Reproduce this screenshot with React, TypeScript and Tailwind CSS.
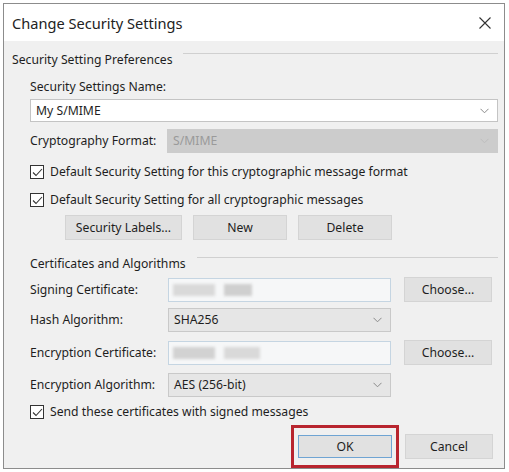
import React from "react";

function Chevron({ className = "" }: { className?: string }) {
  return (
    <svg width="9" height="6" viewBox="0 0 9 6" className={className}>
      <polyline points="0.5,0.8 4.5,4.8 8.5,0.8" fill="none" stroke="currentColor" strokeWidth="1" />
    </svg>
  );
}

function Checkbox({ label }: { label: string }) {
  return (
    <div className="flex h-[14px] items-center">
      <div className="flex h-[14px] w-[14px] items-center justify-center border border-[#333] bg-white">
        <svg width="11" height="9" viewBox="0 0 11 9">
          <polyline points="1,4.5 4,7.5 10,1" fill="none" stroke="#333" strokeWidth="1.1" />
        </svg>
      </div>
      <span className="ml-[6px] whitespace-nowrap">{label}</span>
    </div>
  );
}

function Combo({ value, width, disabled = false }: { value: string; width: string; disabled?: boolean }) {
  return (
    <div
      className={`flex h-[24px] items-center justify-between border pl-[5px] pr-[8px] ${width} ${
        disabled ? "border-[#cccccc] bg-[#cccccc] text-[#9a9a9a]" : "border-[#c9c9c9] bg-[#e6e6e6]"
      }`}
    >
      <span>{value}</span>
      <Chevron className={disabled ? "text-[#bdbdbd]" : "text-[#8a8a8a]"} />
    </div>
  );
}

function Blurred({ blobs }: { blobs: { w: string; tone: string }[] }) {
  return (
    <div className="flex h-[24px] w-[223px] items-center gap-[9px] border border-[#c5d5e2] bg-[#f6f7f8] pl-[4px]">
      {blobs.map((b, i) => (
        <div key={i} className={`h-[12px] blur-[1.5px] ${b.w} ${b.tone}`} />
      ))}
    </div>
  );
}

function Button({ children, width }: { children: React.ReactNode; width: string }) {
  return (
    <button
      type="button"
      className={`flex h-[25px] items-center justify-center border border-[#d4d4d4] bg-[#e1e1e1] ${width}`}
    >
      {children}
    </button>
  );
}

function GroupHeader({ title }: { title: string }) {
  return (
    <div className="flex h-[16px] items-start">
      <span className="whitespace-nowrap leading-[16px]">{title}</span>
      <div className="ml-[11px] mt-px h-px flex-1 bg-[#d0d0d0]" />
    </div>
  );
}

export default function App() {
  return (
    <div className="h-[472px] w-[509px] bg-white pl-[3px] pt-[3px] font-['Noto_Sans',sans-serif] text-[12.2px] leading-[16px] text-[#1e1e1e]">
      <div className="flex h-[466px] w-[502px] flex-col border border-[#8c8c8c]">
        <div className="flex h-[37px] items-center justify-between bg-white pl-[8px] pr-[13px]">
          <span className="text-[14.6px] leading-[20px] text-[#222]">Change Security Settings</span>
          <svg width="12" height="12" viewBox="0 0 12 12">
            <path d="M0.5 0.5 L11.5 11.5 M11.5 0.5 L0.5 11.5" stroke="#333" strokeWidth="1.1" />
          </svg>
        </div>

        <div className="flex flex-1 flex-col bg-[#f0f0f0] pl-[8px] pr-[6px] pt-[11px]">
          <GroupHeader title="Security Setting Preferences" />

          <div className="ml-[18px] flex flex-col">
            <span className="mt-[11px]">Security Settings Name:</span>
            <div className="mt-[4px] flex h-[23px] items-center justify-between border border-[#c4c4c4] bg-white pl-[5px] pr-[8px]">
              <span>My S/MIME</span>
              <Chevron className="text-[#8a8a8a]" />
            </div>

            <div className="mt-[7px] flex items-center">
              <span className="w-[137px]">Cryptography Format:</span>
              <Combo value="S/MIME" width="flex-1" disabled />
            </div>

            <div className="mt-[12px]">
              <Checkbox label="Default Security Setting for this cryptographic message format" />
            </div>
            <div className="mt-[14px]">
              <Checkbox label="Default Security Setting for all cryptographic messages" />
            </div>

            <div className="mt-[8px] flex gap-[11px] pl-[35px]">
              <Button width="w-[117px]">Security Labels...</Button>
              <Button width="w-[94px]">New</Button>
              <Button width="w-[94px]">Delete</Button>
            </div>

            <div className="mt-[16px]">
              <GroupHeader title="Certificates and Algorithms" />
            </div>

            <div className="mt-[5px] flex items-center">
              <span className="w-[138px]">Signing Certificate:</span>
              <Blurred
                blobs={[
                  { w: "w-[42px]", tone: "bg-[#d9d9d9]" },
                  { w: "w-[28px]", tone: "bg-[#cfcfcf]" },
                ]}
              />
              <div className="ml-[13px]">
                <Button width="w-[88px]">Choose...</Button>
              </div>
            </div>

            <div className="mt-[6px] flex items-center">
              <span className="w-[138px]">Hash Algorithm:</span>
              <Combo value="SHA256" width="w-[223px]" />
            </div>

            <div className="mt-[8px] flex items-center">
              <span className="w-[138px]">Encryption Certificate:</span>
              <Blurred
                blobs={[
                  { w: "w-[42px]", tone: "bg-[#d2d2d2]" },
                  { w: "w-[36px]", tone: "bg-[#d9d9d9]" },
                ]}
              />
              <div className="ml-[13px]">
                <Button width="w-[88px]">Choose...</Button>
              </div>
            </div>

            <div className="mt-[8px] flex items-center">
              <span className="w-[138px]">Encryption Algorithm:</span>
              <Combo value="AES (256-bit)" width="w-[223px]" />
            </div>

            <div className="mt-[8px]">
              <Checkbox label="Send these certificates with signed messages" />
            </div>
          </div>

          <div className="mt-[6px] flex items-center justify-end pr-[5px]">
            <div className="border-[3px] border-[#b8252f] px-[4px] py-[7px]">
              <button
                type="button"
                className="flex h-[23px] w-[94px] items-center justify-center border border-[#6fa4d3] bg-[#e1e1e1]"
              >
                OK
              </button>
            </div>
            <div className="ml-[6px]">
              <Button width="w-[88px]">Cancel</Button>
            </div>
          </div>
        </div>
      </div>
    </div>
  );
}
